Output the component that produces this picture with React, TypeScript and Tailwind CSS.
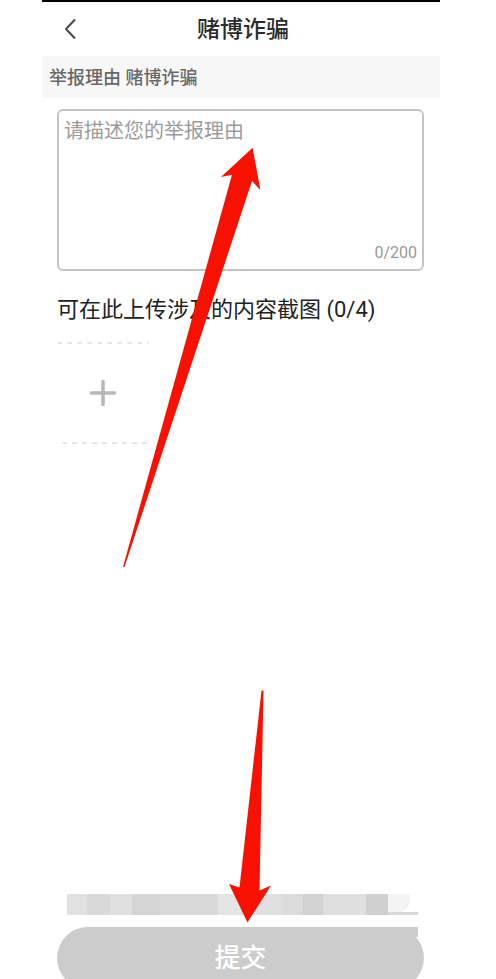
import React, { useState } from 'react';

const REASON = '赌博诈骗';
const MAX_LENGTH = 200;
const MAX_IMAGES = 4;

const BackIcon = () => (
  <svg viewBox="0 0 12 22" className="w-3 h-[22px]" fill="none" stroke="#4a4a4a" strokeWidth="2" aria-hidden="true">
    <path d="M11 1.500 2 11l9 9.500" strokeLinejoin="round" />
  </svg>
);

// Dashed lines above and below the plus sign, open at the sides
const UploadIcon = () => (
  <svg viewBox="0 0 92 102" className="w-[92px] h-[102px]" fill="none" aria-hidden="true">
    <path d="M0.5 1H92" stroke="#dedede" strokeWidth="1.5" strokeDasharray="4.5 5.5" />
    <path d="M5 101H90" stroke="#dedede" strokeWidth="1.5" strokeDasharray="5 5" />
    <path d="M46 39.500V62.500M34.500 51H57.500" stroke="#b8b8b8" strokeWidth="3.600" strokeLinecap="round" />
  </svg>
);

const ArrowUp = () => (
  <svg
    viewBox="0 0 140 422"
    className="pointer-events-none absolute left-[79px] top-[145px] w-[140px] h-[422px]"
    fill="#f81100"
    aria-hidden="true"
  >
    <path d="M131.600 .7 139.400 43 131 34 3.500 420H2L111 27.700 100 30Z" />
  </svg>
);

const ArrowDown = () => (
  <svg
    viewBox="0 0 44 234"
    className="pointer-events-none absolute left-1/2 bottom-[56px] -ml-[13px] w-11 h-[234px]"
    fill="#f81100"
    aria-hidden="true"
  >
    <path d="M33.500 1.500H35.500L31.500 201.500 43 196.500 19.500 233.500 1 195 11.500 198.500Z" />
  </svg>
);

const Mosaic = () => (
  <div className="ml-[10px] mr-[6px] flex h-[21px]">
    <span className="grow-20 bg-[#e1e1e1]" />
    <span className="grow-23 bg-[#d9d9d9]" />
    <span className="grow-22 bg-[#e0e0e0]" />
    <span className="grow-28 bg-[#d5d5d5]" />
    <span className="grow-58 bg-[#d9d9d9]" />
    <span className="grow-22 bg-[#e5e5e5]" />
    <span className="grow-42 bg-[#e0e0e0]" />
    <span className="grow-21 bg-[#dbdbdb]" />
    <span className="grow-20 bg-[#d2d2d2]" />
    <span className="grow-43 bg-[#dfdfdf]" />
    <span className="grow-22 bg-[#d0d0d0]" />
    <span className="flex w-[30px] flex-col border-b-3 border-[#d9d9d9]">
      <span className="mr-2 grow rounded-br-xl bg-[#f3f3f3]" />
    </span>
  </div>
);

export default function App() {
  const [text, setText] = useState('');

  return (
    <div className="min-h-screen bg-white pl-[42px] pr-14 font-[Roboto,'Noto_Sans_CJK_SC',sans-serif]">
      <div className="relative flex min-h-screen flex-col border-t-2 border-black">
        <header className="relative flex h-[54px] items-center justify-center pl-1 pt-[2px]">
          <button type="button" aria-label="返回" className="absolute left-[22px] top-4">
            <BackIcon />
          </button>
          <h1 className="text-[23px] leading-8 font-medium text-[#2b2b2b]">{REASON}</h1>
        </header>

        <div className="flex h-[42px] items-center bg-[#f7f7f7] px-[7px] pt-[2px] text-lg font-medium text-[#686868]">
          举报理由 {REASON}
        </div>

        <main className="grow pl-[15px] pr-4 pt-[11px]">
          <div className="flex h-[162px] flex-col rounded-md border-2 border-[#c4c4c4] px-[5px] pb-1 pt-[6px]">
            <textarea
              aria-label="举报理由"
              maxLength={MAX_LENGTH}
              value={text}
              onChange={(e) => setText(e.target.value)}
              placeholder="请描述您的举报理由"
              className="w-full grow resize-none text-xl leading-7 text-[#333] outline-none placeholder:text-[#9b9b9b]"
            />
            <div className="text-right text-base text-[#999]">
              {text.length}/{MAX_LENGTH}
            </div>
          </div>

          <h2 className="mt-[23px] text-[22px] leading-8 text-[#222]">
            可在此上传涉及的内容截图 (0/{MAX_IMAGES})
          </h2>
          <button type="button" aria-label="上传截图" className="mt-4 block">
            <UploadIcon />
          </button>
        </main>

        <footer className="relative pl-[15px] pr-4">
          <Mosaic />
          <div className="relative mt-3 h-[52px] overflow-hidden">
            <button
              type="submit"
              className="h-[62px] w-full rounded-full bg-[#ccc] text-[26px] leading-8 font-medium text-white"
            >
              提交
            </button>
            <span className="absolute right-0 top-0 h-[10px] w-[6px] bg-white" />
            <span className="absolute right-[6px] top-0 h-[10px] w-6 bg-[#ccc]" />
          </div>
          <ArrowDown />
        </footer>

        <ArrowUp />
      </div>
    </div>
  );
}
